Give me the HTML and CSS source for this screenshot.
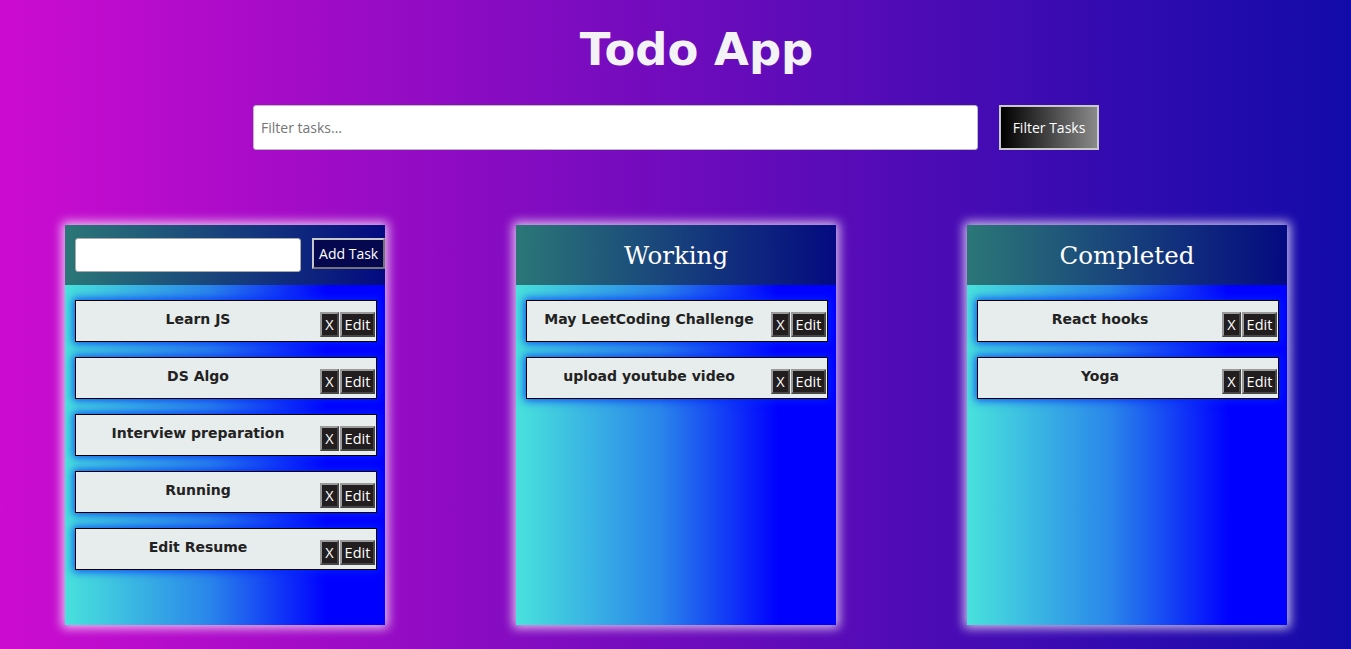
FILE: index.html
```html
<!DOCTYPE html>
<html lang="en">
<head>
<meta charset="utf-8">
<title>Todo App</title>
<link rel="stylesheet" href="styles.css">
</head>
<body>
  <h1 class="title">Todo App</h1>
  <div class="filter-row">
    <input class="filter-input" type="text" placeholder="Filter tasks...">
    <button class="filter-btn">Filter Tasks</button>
  </div>
  <main class="board">
    <section class="column">
      <div class="column-head add-head">
        <input class="add-input" type="text">
        <button class="add-btn">Add Task</button>
      </div>
      <div class="column-body">
        <div class="card"><p class="card-text">Learn JS</p><div class="card-actions"><button class="btn-x">X</button><button class="btn-edit">Edit</button></div></div>
        <div class="card"><p class="card-text">DS Algo</p><div class="card-actions"><button class="btn-x">X</button><button class="btn-edit">Edit</button></div></div>
        <div class="card"><p class="card-text">Interview preparation</p><div class="card-actions"><button class="btn-x">X</button><button class="btn-edit">Edit</button></div></div>
        <div class="card"><p class="card-text">Running</p><div class="card-actions"><button class="btn-x">X</button><button class="btn-edit">Edit</button></div></div>
        <div class="card"><p class="card-text">Edit Resume</p><div class="card-actions"><button class="btn-x">X</button><button class="btn-edit">Edit</button></div></div>
      </div>
    </section>
    <section class="column">
      <div class="column-head"><h2 class="column-title">Working</h2></div>
      <div class="column-body">
        <div class="card"><p class="card-text">May LeetCoding Challenge</p><div class="card-actions"><button class="btn-x">X</button><button class="btn-edit">Edit</button></div></div>
        <div class="card"><p class="card-text">upload youtube video</p><div class="card-actions"><button class="btn-x">X</button><button class="btn-edit">Edit</button></div></div>
      </div>
    </section>
    <section class="column">
      <div class="column-head"><h2 class="column-title">Completed</h2></div>
      <div class="column-body">
        <div class="card"><p class="card-text">React hooks</p><div class="card-actions"><button class="btn-x">X</button><button class="btn-edit">Edit</button></div></div>
        <div class="card"><p class="card-text">Yoga</p><div class="card-actions"><button class="btn-x">X</button><button class="btn-edit">Edit</button></div></div>
      </div>
    </section>
  </main>
</body>
</html>
```
FILE: styles.css
```css
* { box-sizing: border-box; }

html, body { height: 100%; }

body {
  margin: 0;
  font-family: "DejaVu Sans", sans-serif;
  background: linear-gradient(to right, #cc0cd0, #120ba9);
  overflow: hidden;
}

.title {
  margin: 0;
  height: 105px;
  padding-top: 24px;
  padding-left: 42px;
  text-align: center;
  font-family: "DejaVu Sans", sans-serif;
  font-weight: bold;
  font-size: 45px;
  line-height: 52px;
  color: #f3f3f6;
}

.filter-row {
  display: flex;
  justify-content: center;
  gap: 21px;
  padding-left: 1px;
}

.filter-input {
  width: 725px;
  height: 45px;
  border: 1px solid #bbb;
  border-radius: 3px;
  background: #fff;
  padding: 0 7px;
  font-family: "Open Sans", sans-serif;
  font-size: 14px;
  color: #333;
}
.filter-input::placeholder { color: #757575; }

.filter-btn {
  width: 100px;
  height: 45px;
  border: 2px solid #c9c9c9;
  background: linear-gradient(to right, #000, #8a8a8a);
  color: #fff;
  font-family: "Open Sans", sans-serif;
  font-size: 14px;
  padding: 0;
}

.board {
  display: flex;
  justify-content: center;
  gap: 131px;
  margin-top: 75px;
  padding-left: 1px;
}

.column {
  width: 320px;
  height: 400px;
  display: flex;
  flex-direction: column;
  box-shadow: 0 0 10px 3px rgba(255, 255, 255, 0.75);
}

.column-head {
  height: 60px;
  flex: none;
  display: flex;
  align-items: center;
  justify-content: center;
  background: linear-gradient(to right, #2b7777, #040a80);
}

.column-title {
  margin: 0;
  padding-top: 1px;
  font-family: "DejaVu Serif", serif;
  font-weight: normal;
  font-size: 24.5px;
  color: #fff;
}

.add-head {
  justify-content: flex-start;
  align-items: flex-start;
  padding: 13px 0 0 10px;
  gap: 11px;
}

.add-input {
  width: 227px;
  height: 34px;
  border: 1px solid #aaa;
  border-radius: 3px;
  background: #fff;
}

.add-btn {
  height: 31px;
  width: 73px;
  padding: 0;
  background: #05084f;
  color: #fff;
  border: 2px outset #c8c8c8;
  font-family: "Open Sans", sans-serif;
  font-size: 14px;
}

.column-body {
  flex: 1;
  background: linear-gradient(to right, #48e2dc, #2a86ea 45%, #0000ff 82%);
  padding: 15px 8px 0 10px;
  display: flex;
  flex-direction: column;
  gap: 15px;
}

.card {
  height: 42px;
  display: flex;
  border: 1.5px solid #000;
  background: #e7ecec;
  box-shadow: 0 0 8px 2px rgba(0, 40, 255, 0.75);
}

.card-text {
  flex: 1;
  margin: 0;
  padding-top: 10px;
  text-align: center;
  font-weight: bold;
  font-size: 14px;
  line-height: 16px;
  color: #222;
}

.card-actions {
  display: flex;
  align-items: flex-start;
  padding-top: 11px;
  padding-right: 1px;
  gap: 1px;
}

.btn-x, .btn-edit {
  height: 25px;
  padding: 0 2px;
  background: #221d1e;
  color: #fff;
  border: 2px outset #9a9a9a;
  font-family: "Open Sans", sans-serif;
  font-size: 14.5px;
  line-height: 18px;
}
.btn-x { width: 19px; padding: 0; }
.btn-edit { width: 35px; }
```
